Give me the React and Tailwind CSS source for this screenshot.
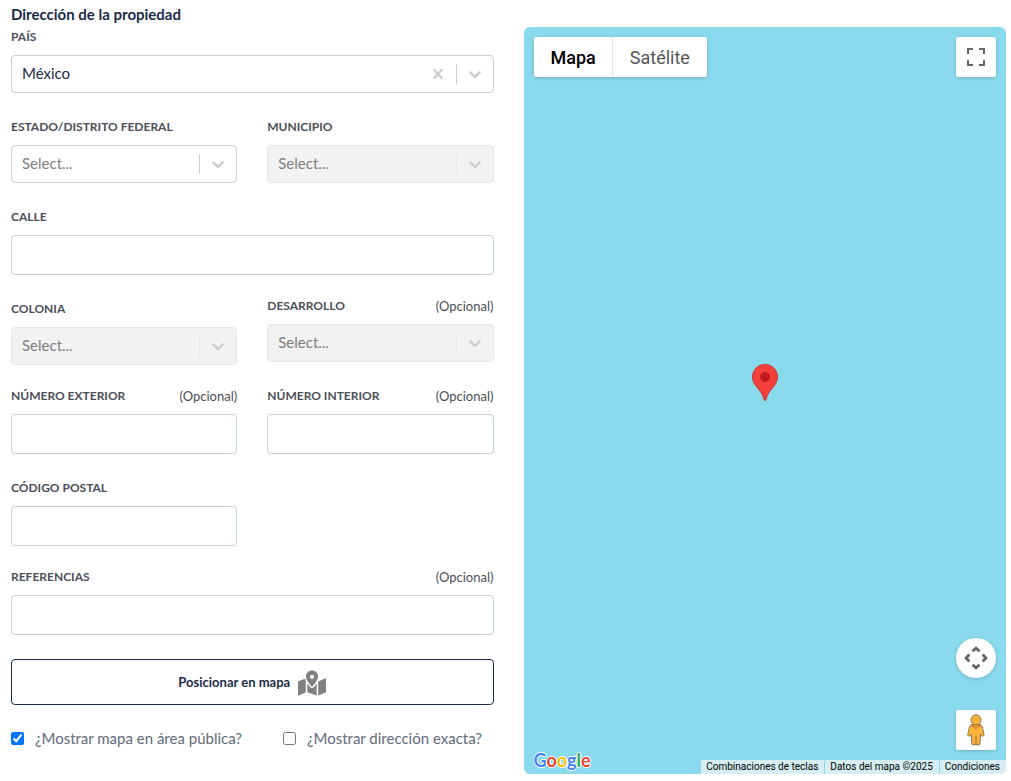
import { useId, useState } from "react";
import { FaMapMarkedAlt } from "react-icons/fa";

function Label({ htmlFor, optional, children }) {
  return (
    <div
      className={
        optional
          ? "mb-2 flex items-center justify-between text-xs leading-5 text-[#4b4f58]"
          : "mb-2 flex items-center justify-between pt-[3px] text-xs leading-5 text-[#4b4f58]"
      }
    >
      <label htmlFor={htmlFor} className="font-bold uppercase">
        {children}
      </label>
      {optional && <span className="text-[13px]">(Opcional)</span>}
    </div>
  );
}

function TextField({ label, optional }) {
  const id = useId();
  return (
    <div>
      <Label htmlFor={id} optional={optional}>
        {label}
      </Label>
      <input
        id={id}
        type="text"
        className="block h-10 w-full rounded border border-[#c3cfdf] bg-white px-3 text-sm text-[#1a2b48] outline-none focus:border-[#2684ff]"
      />
    </div>
  );
}

function SelectField({ label, optional, disabled, options = [], initial = "", clearable }) {
  const id = useId();
  const [value, setValue] = useState(initial);
  return (
    <div>
      <Label htmlFor={id} optional={optional}>
        {label}
      </Label>
      <div className="relative">
        <select
          id={id}
          disabled={disabled}
          value={value}
          onChange={(e) => setValue(e.target.value)}
          className={
            value
              ? "block h-[38px] w-full appearance-none rounded border border-[#cccccc] bg-white pr-20 pb-[2px] pl-[10px] text-[15px] text-[#1a2b48] outline-none"
              : "block h-[38px] w-full appearance-none rounded border border-[#cccccc] bg-white pr-10 pb-[2px] pl-[10px] text-[15px] text-[#808080] opacity-100 outline-none disabled:border-[#e6e6e6] disabled:bg-[#f2f2f2]"
          }
        >
          <option value="">Select...</option>
          {options.map((o) => (
            <option key={o}>{o}</option>
          ))}
        </select>
        <div className="pointer-events-none absolute inset-y-0 right-0 flex items-center text-[#cccccc]">
          {clearable && value && (
            <button
              type="button"
              aria-label="Borrar"
              onClick={() => setValue("")}
              className="pointer-events-auto p-2"
            >
              <svg width="20" height="20" viewBox="0 0 20 20" fill="currentColor">
                <path d="M14.348 14.849c-0.469 0.469-1.229 0.469-1.697 0l-2.651-3.030-2.651 3.029c-0.469 0.469-1.229 0.469-1.697 0-0.469-0.469-0.469-1.229 0-1.697l2.758-3.15-2.759-3.152c-0.469-0.469-0.469-1.228 0-1.697s1.228-0.469 1.697 0l2.652 3.031 2.651-3.031c0.469-0.469 1.228-0.469 1.697 0s0.469 1.229 0 1.697l-2.758 3.152 2.758 3.15c0.469 0.469 0.469 1.229 0 1.698z" />
              </svg>
            </button>
          )}
          <span className={disabled ? "h-5 w-px bg-[#e6e6e6]" : "h-5 w-px bg-[#cccccc]"} />
          <span className="p-2 pr-[9px]">
            <svg width="20" height="20" viewBox="0 0 20 20" fill="currentColor">
              <path d="M4.516 7.548c0.436-0.446 1.043-0.481 1.576 0l3.908 3.747 3.908-3.747c0.533-0.481 1.141-0.446 1.574 0 0.436 0.445 0.408 1.197 0 1.615-0.406 0.418-4.695 4.502-4.695 4.502-0.217 0.223-0.502 0.335-0.787 0.335s-0.57-0.112-0.789-0.335c0 0-4.287-4.084-4.695-4.502s-0.436-1.17 0-1.615z" />
            </svg>
          </span>
        </div>
      </div>
    </div>
  );
}

function Check({ label, defaultChecked }) {
  return (
    <label className="flex items-center gap-[11px] text-[15px] leading-5 text-[#5f6b7c]">
      <input type="checkbox" defaultChecked={defaultChecked} className="size-[13px]" />
      {label}
    </label>
  );
}

function Pin() {
  return (
    <svg width="26" height="37" viewBox="0 0 26 37" className="absolute bottom-1/2 left-1/2 -translate-x-1/2">
      <path
        d="M13 .5C6 .5.5 6 .5 13c0 3.4 1.300 6 3.300 8.800C7 26 10.600 29 12 35.200c.2.900.5 1.300 1 1.300s.8-.4 1-1.300C15.400 29 19 26 22.200 21.800c2-2.800 3.300-5.400 3.300-8.800C25.500 6 20 .5 13 .5z"
        fill="#f4403a"
        stroke="#d3302b"
        strokeWidth="1"
      />
      <circle cx="13" cy="13" r="5" fill="#c01a20" />
    </svg>
  );
}

function Pegman() {
  return (
    <svg width="18" height="32" viewBox="0 0 18 32">
      <path
        d="M6.300 10.300C3.500 10.800 2.500 12 2.100 14.500L.8 20.500c-.2 1.300 1.200 2.200 2.600 1.300l.8-1.800.8 10.800h7.800l.8-10.800.8 1.800c1.400.9 2.800 0 2.600-1.300l-1.300-6c-.4-2.500-1.400-3.700-4.200-4.200z"
        fill="#fbb437"
        stroke="#8b7449"
        strokeWidth="1"
      />
      <path d="M4.800 11.200h8.400L9 16.500z" fill="#e09138" />
      <path d="M9 21.500v9.500" stroke="#8b7449" />
      <circle cx="9" cy="5.800" r="5" fill="#fbb437" stroke="#8b7449" />
      <path d="M4.300 10.800l2 .8M13.700 10.800l-2 .8" stroke="#e2492f" strokeWidth="1.300" />
    </svg>
  );
}

function MapPanel() {
  return (
    <section
      aria-label="Mapa"
      className="relative flex flex-1 flex-col justify-between overflow-hidden rounded-md bg-[#88daec] font-[Roboto,sans-serif]"
    >
      <Pin />
      <div className="flex justify-between p-[10px]">
        <div className="flex h-10 rounded-xs bg-white text-lg shadow-[0_1px_4px_-1px_rgba(0,0,0,0.3)]">
          <button type="button" className="pt-[2px] pr-4 pl-[17px] font-medium text-black">
            Mapa
          </button>
          <button type="button" className="border-l border-[#e6e6e6] px-[17px] pt-[2px] text-[#565656]">
            Satélite
          </button>
        </div>
        <button
          type="button"
          aria-label="Pantalla completa"
          className="flex size-10 items-center justify-center rounded-xs bg-white shadow-[0_1px_4px_-1px_rgba(0,0,0,0.3)]"
        >
          <svg width="18" height="18" viewBox="0 0 18 18" fill="#666666">
            <path d="M0 0v6h2V2h4V0H0zm16 0h-4v2h4v4h2V0h-2zm0 16h-4v2h6v-6h-2v4zM2 12H0v6h6v-2H2v-4z" />
          </svg>
        </button>
      </div>
      <div className="flex flex-col">
        <div className="flex flex-col items-end gap-8 px-[10px] pb-[10px]">
          <button
            type="button"
            aria-label="Controles de la cámara"
            className="flex size-10 items-center justify-center rounded-full bg-white shadow-[0_1px_4px_-1px_rgba(0,0,0,0.3)]"
          >
            <svg width="24" height="24" viewBox="0 0 24 24" fill="none" stroke="#666666" strokeWidth="2.800">
              <path d="M8.500 5.300L12 2.100l3.500 3.200M8.500 18.700l3.500 3.200 3.500-3.200M5.300 8.500L2.100 12l3.200 3.500M18.700 8.500l3.200 3.500-3.200 3.500" />
            </svg>
          </button>
          <button
            type="button"
            aria-label="Pegman"
            className="flex size-10 items-center justify-center rounded-xs bg-white shadow-[0_1px_4px_-1px_rgba(0,0,0,0.3)]"
          >
            <Pegman />
          </button>
        </div>
        <div className="flex items-end justify-between">
          <a
            href="#google"
            aria-label="Google"
            className="-mt-6 ml-[10px] pb-1 font-[Lato,sans-serif] text-lg leading-5 font-bold [text-shadow:1px_0_#fff,-1px_0_#fff,0_1px_#fff,0_-1px_#fff]"
          >
            <span className="text-[#4285f4]">G</span>
            <span className="text-[#ea4335]">o</span>
            <span className="text-[#fbbc04]">o</span>
            <span className="text-[#4285f4]">g</span>
            <span className="text-[#34a853]">l</span>
            <span className="text-[#ea4335]">e</span>
          </a>
          <div className="flex gap-px text-[10px] leading-[14px] text-black">
            <button type="button" className="bg-[#d5edf3] pr-[6px] pl-[5px]">
              Combinaciones de teclas
            </button>
            <span className="bg-[#d5edf3] pr-[6px] pl-[5px]">Datos del mapa ©2025</span>
            <a href="#condiciones" className="bg-[#d5edf3] pr-[6px] pl-[5px]">
              Condiciones
            </a>
          </div>
        </div>
      </div>
    </section>
  );
}

export default function App() {
  return (
    <main className="grid min-h-screen grid-cols-2 gap-[30px] bg-white pr-[5px] pl-[11px] font-[Lato,sans-serif]">
      <form onSubmit={(e) => e.preventDefault()} className="pt-1">
        <h2 className="text-[15px] leading-5 font-bold text-[#1a2b48]">Dirección de la propiedad</h2>
        <div className="flex flex-col gap-[21px]">
          <SelectField label="País" options={["México"]} initial="México" clearable />
          <div className="grid grid-cols-2 gap-[30px]">
            <SelectField label="Estado/Distrito Federal" options={["Jalisco", "Nuevo León", "Yucatán"]} />
            <SelectField label="Municipio" disabled />
          </div>
          <TextField label="Calle" />
          <div className="grid grid-cols-2 gap-[30px]">
            <SelectField label="Colonia" disabled />
            <SelectField label="Desarrollo" optional disabled />
          </div>
          <div className="grid grid-cols-2 gap-[30px]">
            <TextField label="Número exterior" optional />
            <TextField label="Número interior" optional />
          </div>
          <div className="grid grid-cols-2 gap-[30px]">
            <TextField label="Código Postal" />
          </div>
          <TextField label="Referencias" optional />
        </div>
        <button
          type="button"
          className="mt-6 flex h-[46px] w-full items-center justify-center gap-2 rounded border border-[#1a2b48] pt-px text-[13px] font-bold text-[#1a2b48]"
        >
          Posicionar en mapa
          <FaMapMarkedAlt className="size-7 text-[#808080]" />
        </button>
        <div className="mt-[23px] flex flex-wrap gap-x-[41px] gap-y-2">
          <Check label="¿Mostrar mapa en área pública?" defaultChecked />
          <Check label="¿Mostrar dirección exacta?" />
        </div>
      </form>
      <div className="flex flex-col pt-[27px] pb-[7px]">
        <MapPanel />
      </div>
    </main>
  );
}
